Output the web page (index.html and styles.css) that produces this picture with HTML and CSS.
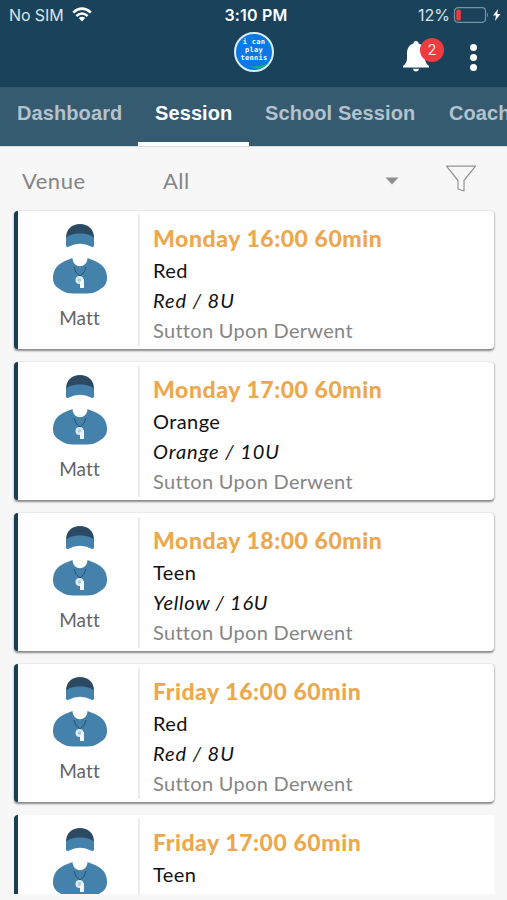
FILE: index.html
```html
<!DOCTYPE html>
<html lang="en">
<head>
<meta charset="utf-8">
<title>Sessions</title>
<link rel="stylesheet" href="styles.css">
</head>
<body>
<svg class="defs" width="0" height="0" aria-hidden="true">
  <symbol id="coach" viewBox="0 0 56 72">
    <path fill="#2b4a62" d="M14 19V15C14 6 20 1 28 1s14 5 14 14v4z"/>
    <path fill="#4482ab" d="M14 14.500C20 9 36 9 42 14.500v8q0 2-2.500 1.200Q28 17.800 16.500 23.700 14 24.500 14 22.500z"/>
    <path fill="#4482ab" d="M20.500 35C21 46 35 46 35.500 35L43 38C51 41.500 55 47 55 55C55 61 52 64 47 67Q42 70.500 35 70.500H21Q14 70.500 9 67C4 64 1 61 1 55C1 47 5 41.500 13 38z"/>
    <path fill="none" stroke="#28536f" stroke-width="1" d="M22 44q1 6 6 9 5-3 6-9"/>
    <circle cx="27.500" cy="57" r="4" fill="#dcebf5"/>
    <path fill="#f2f8fc" d="M28 56h4v9h-4z"/>
    <circle cx="27.500" cy="57" r="1.700" fill="#a9cbe1"/>
  </symbol>
</svg>
<div class="screen">
  <header class="top">
    <div class="status">
      <div class="carrier"><span>No SIM</span>
        <svg width="20" height="15" viewBox="0 0 20 15"><g fill="none" stroke="#fff" stroke-width="2.500"><path d="M1.200 5.500Q10-2.200 18.800 5.500"/><path d="M4.400 9Q10 4 15.600 9"/></g><path fill="#fff" d="M6.800 11.100Q10 8.200 13.200 11.100L10 14.400z"/></svg>
      </div>
      <div class="clock">3:10 PM</div>
      <div class="power"><span>12%</span>
        <svg width="50" height="18" viewBox="0 0 50 18"><rect x="1.500" y="1.700" width="31" height="14.600" rx="3.500" fill="none" stroke="#7893a4" stroke-width="1.200"/><rect x="3.300" y="3.500" width="4.500" height="11" rx="1.500" fill="#ee3b3c"/><path fill="#7893a4" d="M34 6.500q2 2.500 0 5z"/><path fill="#fff" d="M45 3l-5 6.500h3l-1 5.500 5.500-7h-3.200z"/></svg>
      </div>
    </div>
    <div class="bar">
      <div class="logo"><span>i can</span><span>play</span><span>tennis</span>
        <svg class="swoosh" width="20" height="6" viewBox="0 0 20 6"><path fill="#12b66e" d="M0 3Q10 5 20 0 12 9 0 3z"/></svg>
      </div>
      <div class="bell">
        <svg width="28" height="32" viewBox="0 0 28 32"><path fill="#fff" d="M11.500 3.500a2.500 2.500 0 0 1 5 0C22 5.500 23 9.500 23 14v4c0 4 1.500 6 4 8v1.500H1V26c2.500-2 4-4 4-8v-4c0-4.500 1-8.500 6.500-10.500zM10.800 28.700h6.400q-.7 2.800-3.200 2.800t-3.200-2.800z"/></svg>
        <span class="badge">2</span>
      </div>
      <div class="more"><i></i><i></i><i></i></div>
    </div>
  </header>
  <nav class="tabs">
    <a class="tab t1"><span>Dashboard</span></a>
    <a class="tab t2 active"><span>Session</span></a>
    <a class="tab t3"><span>School Session</span></a>
    <a class="tab t4"><span>Coach</span></a>
  </nav>
  <main>
    <div class="filter">
      <span class="label">Venue</span><span class="value">All</span>
      <svg class="caret" width="14" height="8" viewBox="0 0 14 8"><path fill="#8f8f8f" d="M.5.5h13L7 7.500z"/></svg>
      <svg class="funnel" width="32" height="28" viewBox="0 0 32 28"><path fill="none" stroke="#929292" stroke-width="1.200" stroke-linejoin="round" d="M1.500 1.200h29L19 15.500V26l-6-2V15.500z"/></svg>
    </div>
    <div class="list">
      <article class="card"><div class="coach"><svg width="56" height="72"><use href="#coach"/></svg><span class="name">Matt</span></div><div class="info"><h2>Monday 16:00 60min</h2><p>Red</p><p class="group">Red / 8U</p><p class="venue">Sutton Upon Derwent</p></div></article>
      <article class="card"><div class="coach"><svg width="56" height="72"><use href="#coach"/></svg><span class="name">Matt</span></div><div class="info"><h2>Monday 17:00 60min</h2><p>Orange</p><p class="group">Orange / 10U</p><p class="venue">Sutton Upon Derwent</p></div></article>
      <article class="card"><div class="coach"><svg width="56" height="72"><use href="#coach"/></svg><span class="name">Matt</span></div><div class="info"><h2>Monday 18:00 60min</h2><p>Teen</p><p class="group yellow">Yellow / 16U</p><p class="venue">Sutton Upon Derwent</p></div></article>
      <article class="card"><div class="coach"><svg width="56" height="72"><use href="#coach"/></svg><span class="name">Matt</span></div><div class="info"><h2>Friday 16:00 60min</h2><p>Red</p><p class="group">Red / 8U</p><p class="venue">Sutton Upon Derwent</p></div></article>
      <article class="card last"><div class="coach"><svg width="56" height="72"><use href="#coach"/></svg></div><div class="info"><h2>Friday 17:00 60min</h2><p>Teen</p></div></article>
    </div>
  </main>
</div>
</body>
</html>
```
FILE: styles.css
```css
* { box-sizing: border-box; }
body { margin: 0; background: #f7f7f7; font-family: Lato, "Liberation Sans", sans-serif; }
.defs { position: absolute; }
.screen { width: 507px; height: 900px; overflow: hidden; display: flex; flex-direction: column; }
svg { display: block; flex: none; }

.top { height: 87px; background: #1a425a; color: #fff; flex: none; }
.status { height: 30px; display: grid; grid-template-columns: 1fr auto 1fr; align-items: center; padding: 0 4px 0 9px; font: 16px/30px Inter, sans-serif; }
.carrier, .power { display: flex; align-items: center; color: #dce5ea; }
.carrier { gap: 8px; }
.carrier span { letter-spacing: -.1px; }
.carrier svg { margin-top: -2px; }
.power { justify-content: flex-end; gap: 3px; }
.clock { font-weight: 600; letter-spacing: .2px; }
.bar { height: 57px; display: flex; align-items: flex-start; padding-left: 234px; }
.logo { position: relative; width: 40px; height: 40px; margin-top: 2px; border: 2px solid #d8f0fc; border-radius: 50%; background: #0b78e6; display: flex; flex-direction: column; align-items: center; padding-top: 4px; font: bold 7px/8px "DejaVu Sans Mono", monospace; letter-spacing: .3px; }
.logo span { height: 8px; }
.swoosh { position: absolute; left: 13px; bottom: 1px; }
.bell { position: relative; margin: 10px 0 0 128px; }
.badge { position: absolute; left: 18px; top: -2px; width: 24px; height: 24px; border-radius: 50%; background: #ee3b3d; font: 15px/24px Roboto, sans-serif; text-align: center; color: #ffe4e4; }
.more { display: flex; flex-direction: column; gap: 3px; margin: 14px 0 0 40px; }
.more i { width: 7px; height: 7px; border-radius: 50%; background: #fff; }

.tabs { height: 60px; flex: none; display: flex; background: #365a70; border-bottom: 1px solid #d9d9d9; font: bold 20px/52px "Liberation Sans", sans-serif; letter-spacing: .1px; color: #b4c2cc; white-space: nowrap; overflow: hidden; }
.tab { flex: none; padding-left: 17px; }
.t1 { width: 138px; }
.t2 { width: 111px; }
.t3 { width: 182px; padding-left: 16px; }
.t4 { padding-left: 18px; }
.active { color: #fff; border-bottom: 4px solid #fff; }

main { flex: 1; min-height: 0; padding: 0 13px 0 14px; }
.filter { height: 64px; display: flex; align-items: center; padding: 2px 0 0 8px; color: #858585; font-size: 22px; }
.label { width: 141px; letter-spacing: .5px; }
.value { width: 222px; letter-spacing: .5px; }
.caret { margin-right: 46px; margin-top: 2px; }
.funnel { margin-top: -3px; }
.list { display: flex; flex-direction: column; gap: 13px; }
.card { height: 138px; display: flex; flex: none; background: #fff; border-left: 4px solid #163f56; border-radius: 4px; box-shadow: 0 1.500px 2px #8b8b8b, 1px 0 2px #ddd; }
.coach { width: 122px; display: flex; flex-direction: column; align-items: center; margin: 4px 0 3px; padding: 8px 0 0 3px; border-right: 2px solid #ececec; }
.name { margin-top: 11px; font-size: 19px; line-height: 24px; color: #646464; letter-spacing: .1px; }
.info { padding: 12px 0 0 13px; white-space: nowrap; }
h2 { margin: 0 0 2px; font-size: 23px; line-height: 30px; font-weight: 900; color: #eba84e; letter-spacing: .55px; }
p { margin: 0; font-size: 20px; line-height: 30px; color: #111; letter-spacing: .4px; }
.group { font-style: italic; letter-spacing: .95px; }
.yellow { letter-spacing: .75px; }
.venue { color: #858585; letter-spacing: .3px; }
.last { height: 79px; overflow: hidden; border-radius: 4px 0 0; box-shadow: none; }
.last .coach { margin-bottom: 0; }
```
